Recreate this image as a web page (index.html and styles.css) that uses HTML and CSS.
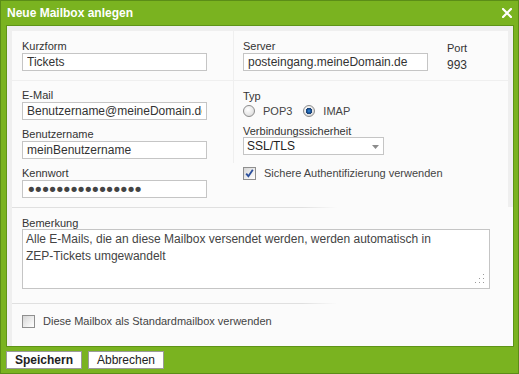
FILE: index.html
```html
<!DOCTYPE html>
<html lang="de">

<head>
    <meta charset="UTF-8">
    <meta name="viewport" content="width=device-width, initial-scale=1.0">
    <title>Neue Mailbox anlegen</title>
    <link rel="stylesheet" href="styles.css">
</head>

<body>
    <div class="dialog">
        <div class="titlebar">
            <span class="title">Neue Mailbox anlegen</span>
            <svg class="close" width="10" height="10" viewBox="0 0 10 10">
                <path d="M1 1 L9 9 M9 1 L1 9" stroke="#fff" stroke-width="2.2" stroke-linecap="square" />
            </svg>
        </div>

        <div class="content">
            <div class="row row-top">
                <div class="cell cell-left">
                    <label class="label">Kurzform</label>
                    <input type="text" class="input" value="Tickets">
                </div>
                <div class="cell cell-right server-cell">
                    <div>
                        <label class="label">Server</label>
                        <input type="text" class="input" value="posteingang.meineDomain.de">
                    </div>
                    <div class="port">
                        <div class="port-label">Port</div>
                        <div class="port-value">993</div>
                    </div>
                </div>
            </div>

            <div class="row row-mid">
                <div class="cell cell-left mid-left">
                    <label class="label">E-Mail</label>
                    <input type="text" class="input" value="Benutzername@meineDomain.de">
                    <label class="label next">Benutzername</label>
                    <input type="text" class="input" value="meinBenutzername">
                </div>
                <div class="cell cell-right mid-right">
                    <label class="label">Typ</label>
                    <div class="radios">
                        <span class="radio"></span>
                        <span class="radio-text">POP3</span>
                        <span class="radio checked"></span>
                        <span class="radio-text">IMAP</span>
                    </div>
                    <label class="label select-label">Verbindungssicherheit</label>
                    <div class="select-wrap">
                        <select class="select">
                            <option>SSL/TLS</option>
                            <option>STARTTLS</option>
                            <option>Keine</option>
                        </select>
                        <svg class="select-arrow" width="7" height="4" viewBox="0 0 7 4">
                            <path d="M0 0 L7 0 L3.5 4 Z" fill="#8c8c8c" />
                        </svg>
                    </div>
                </div>
            </div>

            <div class="row row-pass">
                <div class="cell-left pass-left">
                    <label class="label">Kennwort</label>
                    <input type="password" class="input password" value="geheimespasswort">
                </div>
                <div class="cell-right pass-right">
                    <span class="checkbox checked">
                        <svg width="11" height="11" viewBox="0 0 11 11">
                            <path d="M2.2 5.6 L4.4 8.2 L8.8 1.8" stroke="#2b4f9c" stroke-width="1.8" fill="none" />
                        </svg>
                    </span>
                    <span class="check-text">Sichere Authentifizierung verwenden</span>
                </div>
            </div>

            <div class="section section-note">
                <label class="label">Bemerkung</label>
                <div class="textarea-wrap">
                    <textarea class="textarea">Alle E-Mails, die an diese Mailbox versendet werden, werden automatisch in
ZEP-Tickets umgewandelt</textarea>
                    <svg class="grip" width="10" height="10" viewBox="0 0 10 10">
                        <rect x="8" y="0" width="1" height="1" fill="#9a9a9a" />
                        <rect x="4" y="4" width="1" height="1" fill="#9a9a9a" />
                        <rect x="8" y="4" width="1" height="1" fill="#9a9a9a" />
                        <rect x="0" y="8" width="1" height="1" fill="#9a9a9a" />
                        <rect x="4" y="8" width="1" height="1" fill="#9a9a9a" />
                        <rect x="8" y="8" width="1" height="1" fill="#9a9a9a" />
                    </svg>
                </div>
            </div>

            <div class="section section-default">
                <span class="checkbox"></span>
                <span class="check-text">Diese Mailbox als Standardmailbox verwenden</span>
            </div>
        </div>

        <div class="footer">
            <button type="button" class="button button-save">Speichern</button>
            <button type="button" class="button">Abbrechen</button>
        </div>
    </div>
</body>

</html>
```

FILE: styles.css
```css
body {
    margin: 0;
    padding: 0;
    font-family: 'Liberation Sans', Arial, sans-serif;
}

.dialog {
    width: 519px;
    height: 374px;
    box-sizing: border-box;
    border: 1px solid #5b8d17;
    background-color: #7ab320;
    display: flex;
    flex-direction: column;
}

.titlebar {
    height: 24px;
    flex-shrink: 0;
    display: flex;
    align-items: center;
    justify-content: space-between;
    padding: 0 6px;
    color: #fff;
    font-size: 12px;
    font-weight: bold;
    line-height: 24px;
}

.close {
    display: block;
}

.content {
    height: 322px;
    box-sizing: border-box;
    flex-shrink: 0;
    margin: 0 4px 0 5px;
    padding: 5px 0 0 5px;
    border: 1px solid #5e9417;
    background-color: #efefef;
}

.row {
    width: 496px;
    display: grid;
    grid-template-columns: 221px 274px;
    column-gap: 1px;
}

.row-top {
    height: 49px;
    margin-bottom: 1px;
}

.row-mid {
    height: 82px;
}

.row-pass {
    height: 44px;
    column-gap: 0;
    grid-template-columns: 222px 274px;
    background-color: #fbfbfb;
}

.cell {
    background-color: #fbfbfb;
}

.cell-left {
    padding: 9px 0 0 10px;
}

.cell-right {
    padding: 9px 0 0 9px;
}

.mid-left {
    padding-top: 8px;
}

.label {
    display: block;
    font-size: 11px;
    line-height: 13px;
    color: #333;
}

.label.next {
    margin-top: 8px;
}

.input {
    display: block;
    box-sizing: border-box;
    width: 185px;
    height: 18px;
    margin: 0;
    padding: 0 4px;
    border: 1px solid #c5c5c5;
    background-color: #fff;
    font-family: 'Liberation Sans', Arial, sans-serif;
    font-size: 12px;
    color: #333;
    outline: none;
}

.password {
    padding: 0 3px;
    font-family: 'DejaVu Sans', sans-serif;
    font-size: 18px;
    letter-spacing: -3.5px;
    color: #444;
}

.server-cell {
    display: flex;
}

.port {
    margin-left: 19px;
    color: #333;
}

.port-label {
    font-size: 11px;
    line-height: 13px;
    margin-top: 2px;
}

.port-value {
    font-size: 12px;
    line-height: 14px;
    margin-top: 3px;
}

.radios {
    display: flex;
    align-items: center;
    height: 14px;
    margin-top: 1px;
    font-size: 11px;
    color: #444;
}

.radio {
    width: 12px;
    height: 12px;
    box-sizing: border-box;
    border: 1px solid #8c8c8c;
    border-radius: 50%;
    background: radial-gradient(circle at 40% 35%, #fff 0, #e6e6e6 60%, #cfcfcf 100%);
}

.radio.checked {
    background:
        radial-gradient(circle at 50% 50%, #3b8fd8 0, #1b5aa3 1.6px, #173c6e 3px, rgba(23, 60, 110, 0) 3.4px),
        radial-gradient(circle at 40% 35%, #fff 0, #e2e2e2 60%, #c8c8c8 100%);
}

.radio-text {
    margin: 0 11px 0 8px;
}

.select-label {
    margin-top: 7px;
}

.select-wrap {
    position: relative;
    width: 141px;
    margin-top: -1px;
}

.select {
    display: block;
    width: 141px;
    height: 18px;
    box-sizing: border-box;
    margin: 0;
    padding: 0 0 0 3px;
    border: 1px solid #c5c5c5;
    border-radius: 0;
    background-color: #fff;
    font-family: 'Liberation Sans', Arial, sans-serif;
    font-size: 12px;
    color: #222;
    appearance: none;
    -webkit-appearance: none;
    outline: none;
}

.select-arrow {
    position: absolute;
    right: 5px;
    top: 8px;
}

.pass-left {
    padding: 4px 0 0 10px;
}

.pass-right {
    padding: 4px 0 0 9px;
    display: flex;
    align-items: flex-start;
}

.checkbox {
    width: 13px;
    height: 13px;
    box-sizing: border-box;
    flex-shrink: 0;
    border: 1px solid #8f8f8f;
    background: linear-gradient(135deg, #d6d6d6 0, #f4f4f4 70%, #fff 100%);
    display: flex;
    align-items: center;
    justify-content: center;
}

.check-text {
    margin-left: 8px;
    font-size: 11px;
    line-height: 13px;
    color: #444;
}

.section {
    width: 501px;
    box-sizing: border-box;
    background-color: #fbfbfb;
    border-top: 1px solid #e2e2e2;
    border-image: linear-gradient(to right, #e0e0e0 0, #e0e0e0 290px, rgba(224, 224, 224, 0) 325px) 1;
}

.section-note {
    height: 96px;
    padding: 9px 0 0 10px;
}

.section-note .label {
    line-height: 12px;
}

.textarea-wrap {
    position: relative;
    width: 468px;
}

.textarea {
    display: block;
    box-sizing: border-box;
    width: 468px;
    height: 60px;
    margin: 0;
    padding: 1px 3px;
    border: 1px solid #c5c5c5;
    background-color: #fff;
    font-family: 'Liberation Sans', Arial, sans-serif;
    font-size: 12px;
    line-height: 17px;
    color: #444;
    resize: none;
    outline: none;
    overflow: hidden;
}

.grip {
    position: absolute;
    right: 5px;
    bottom: 5px;
}

.section-default {
    height: 43px;
    padding: 11px 0 0 10px;
    display: flex;
    align-items: flex-start;
}

.footer {
    flex-grow: 1;
    display: flex;
    padding: 4px 0 0 5px;
}

.button {
    width: 76px;
    height: 18px;
    margin: 0 6px 0 0;
    padding: 0;
    border: 1px solid #9a9a9a;
    border-radius: 0;
    background-color: #fff;
    font-family: 'Liberation Sans', Arial, sans-serif;
    font-size: 12px;
    color: #222;
    cursor: pointer;
}

.button-save {
    font-weight: bold;
}
```
